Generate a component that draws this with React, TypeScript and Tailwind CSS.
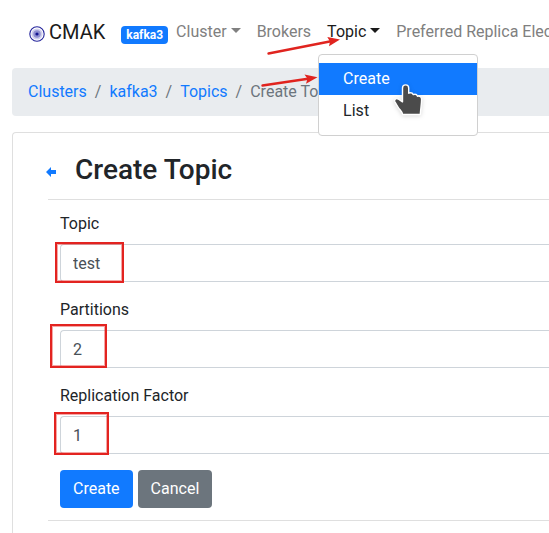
import type { ReactNode } from "react";

function Caret() {
  return <span className="ml-1 inline-block border-x-[5px] border-t-[5px] border-x-transparent border-t-current align-[4px]" />;
}

function Logo() {
  return (
    <svg className="mt-1 h-4 w-4" viewBox="0 0 16 16" aria-hidden="true">
      <circle cx="8" cy="8" r="7.2" fill="#fff" stroke="#24249b" strokeWidth="1.1" />
      <circle cx="8" cy="8" r="5.6" fill="#cfcfec" />
      <circle cx="8" cy="8" r="3.7" fill="#8f8fd0" />
      <circle cx="8" cy="8" r="1.6" fill="#15158f" />
    </svg>
  );
}

function Pointer() {
  return (
    <svg className="absolute top-7 left-[74px] h-9 w-8 drop-shadow-sm" viewBox="393 83 32 36" aria-hidden="true">
      <path
        d="M402.500 88C402.500 83.800 408.700 83.800 408.700 88V93.200C410.500 92.500 412.500 93 413.300 94.600C415 94 416.800 94.500 417.500 96.200C420 95.800 421.700 97 421.600 99.500C421.500 104.500 420.700 108.500 420.300 114.500H402.700C402.300 111.500 399.500 109.700 398 107L394.900 101.800C393.700 99.500 396 98 398.200 99L402.500 101.800Z"
        fill="#4b4b4b"
        stroke="#fff"
        strokeWidth="1.4"
        strokeLinejoin="round"
      />
    </svg>
  );
}

function Arrows() {
  return (
    <svg className="pointer-events-none absolute top-9 left-[256px] z-20 h-14 w-24" viewBox="256 36 96 56" aria-hidden="true">
      <path d="M268.500 53.500L331 41.200M262.500 85.500L308 78.700" stroke="#e0241f" strokeWidth="2.4" strokeLinecap="round" />
      <path d="M340 39.500L327.300 37L330 41.400L329 46.300ZM317.500 77.300L304.500 74.600L307.500 78.800L306 83.800Z" fill="#e0241f" />
    </svg>
  );
}

function NavLink({ active, children }: { active?: boolean; children: ReactNode }) {
  return (
    <a href="#" className={active ? "block p-2 text-[#1a1a1a]" : "block p-2 text-[#808080]"}>
      {children}
    </a>
  );
}

function Field({ id, label, value, mark }: { id: string; label: string; value: string; mark: string }) {
  return (
    <div className="mb-4">
      <label htmlFor={id} className="mb-2 block">{label}</label>
      <div className="relative">
        <input
          id={id}
          defaultValue={value}
          className="block h-[38px] w-full rounded-l border border-r-0 border-[#ced4da] bg-white px-3 text-[#495057] outline-none"
        />
        <span className={`pointer-events-none absolute border-2 border-[#e32320] outline outline-[#e32320]/40 -outline-offset-3 ${mark}`} />
      </div>
    </div>
  );
}

export default function App() {
  return (
    <div className="relative overflow-hidden bg-white pb-3 font-['Roboto','Liberation_Sans',sans-serif] text-base leading-6 text-[#212529]">
      <nav className="flex items-center pt-3 pb-4 pl-[29px] whitespace-nowrap">
        <a href="#" className="mr-4 flex items-center gap-1 text-xl leading-10 text-[#1a1a1a]">
          <Logo />
          CMAK
        </a>
        <span className="mt-[6px] rounded bg-[#117aff] px-[5px] text-xs leading-[18px] font-bold text-white">kafka3</span>
        <ul className="flex">
          <li><NavLink>Cluster<Caret /></NavLink></li>
          <li><NavLink>Brokers</NavLink></li>
          <li className="relative">
            <NavLink active>Topic<Caret /></NavLink>
            <div className="absolute top-full -left-px z-10 mt-[2px] w-40 rounded border border-[#d0d0d0] bg-white py-2">
              <a href="#" className="block bg-[#117aff] px-6 py-1 text-white">Create</a>
              <a href="#" className="block px-6 py-1">List</a>
              <Pointer />
            </div>
          </li>
          <li><NavLink>Preferred Replica Election</NavLink></li>
        </ul>
      </nav>

      <ol className="ml-3 flex rounded-l bg-[#e9ecef] px-4 py-3 whitespace-nowrap text-[#6c757d]">
        <li><a href="#" className="text-[#117aff]">Clusters</a></li>
        <li className="px-2">/</li>
        <li><a href="#" className="text-[#117aff]">kafka3</a></li>
        <li className="px-2">/</li>
        <li><a href="#" className="text-[#117aff]">Topics</a></li>
        <li className="px-2">/</li>
        <li>Create Topic</li>
      </ol>

      <main className="mt-4 ml-3 rounded-tl border-t border-l border-[#dfdfdf] pt-5 pb-3 pl-[35px]">
        <h1 className="flex items-center text-[28px] leading-[34px] font-medium">
          <a href="#" aria-label="Back" className="-ml-[2px] mr-[19px] mt-1">
            <svg className="h-[10px] w-[10px]" viewBox="0 0 10 10" aria-hidden="true">
              <path d="M0 5L5 0V3H10V7H5V10Z" fill="#117aff" />
            </svg>
          </a>
          Create Topic
        </h1>
        <form className="mt-3 border-y border-[#dfdfdf] py-3 pl-3">
          <Field id="topic" label="Topic" value="test" mark="-top-[2px] -left-[5px] h-[41px] w-[69px]" />
          <Field id="partitions" label="Partitions" value="2" mark="-top-[6px] -left-[10px] h-11 w-[57px]" />
          <Field id="replication" label="Replication Factor" value="1" mark="-top-1 -left-[6px] h-[43px] w-[55px]" />
          <div className="flex gap-[5px]">
            <button type="button" className="h-[38px] rounded bg-[#117aff] px-[13px] text-white">Create</button>
            <button type="button" className="h-[38px] rounded bg-[#6c757d] px-[13px] text-white">Cancel</button>
          </div>
        </form>
      </main>
      <Arrows />
    </div>
  );
}
